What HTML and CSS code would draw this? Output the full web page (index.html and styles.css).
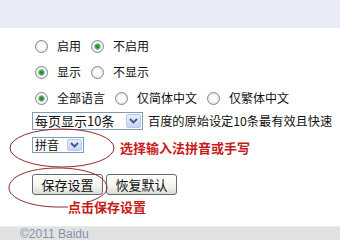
FILE: index.html
```html
<!DOCTYPE html>
<html lang="zh-CN">
<head>
<meta charset="utf-8">
<title>搜索设置</title>
<link rel="stylesheet" href="styles.css">
</head>
<body>
<div class="page">
  <div class="top"></div>
  <div class="main">
    <div class="row">
      <span class="radio"></span><span class="lbl">启用</span>
      <span class="radio on"></span><span class="lbl">不启用</span>
    </div>
    <div class="row">
      <span class="radio on"></span><span class="lbl">显示</span>
      <span class="radio"></span><span class="lbl">不显示</span>
    </div>
    <div class="row">
      <span class="radio on"></span><span class="lbl">全部语言</span>
      <span class="radio"></span><span class="lbl">仅简体中文</span>
      <span class="radio"></span><span class="lbl">仅繁体中文</span>
    </div>
    <div class="selrow">
      <div class="select sel-num">
        <span class="seltext">每页显示10条</span>
        <span class="arrow"><svg width="9" height="6" viewBox="0 0 9 6"><path d="M1 1 L4.5 4.5 L8 1" fill="none" stroke="#3d5585" stroke-width="1.8"/></svg></span>
      </div>
      <span class="note">百度的原始设定10条最有效且快速</span>
    </div>
    <div class="pyrow">
      <div class="select sel-py">
        <span class="seltext">拼音</span>
        <span class="arrow"><svg width="9" height="6" viewBox="0 0 9 6"><path d="M1 1 L4.5 4.5 L8 1" fill="none" stroke="#3d5585" stroke-width="1.8"/></svg></span>
      </div>
      <span class="red red-py">选择输入法拼音或手写</span>
    </div>
    <div class="btnrow">
      <button class="btn">保存设置</button>
      <button class="btn">恢复默认</button>
    </div>
    <div class="red hint">点击保存设置</div>
  </div>
  <div class="footer">©2011 Baidu</div>
  <svg class="marks" width="340" height="240" viewBox="0 0 340 240">
    <ellipse cx="62" cy="148" rx="52" ry="19" fill="none" stroke="#8e2a2a" stroke-width="1"/>
    <path d="M58 207 C 30 207, 9 198, 9 188 C 9 176, 30 168, 58 168 C 86 168, 107 176, 107 188 C 107 194, 98 199, 88 202" fill="none" stroke="#8e2a2a" stroke-width="1"/>
    <path d="M58 207 L68 207" fill="none" stroke="#8e2a2a" stroke-width="1"/>
  </svg>
</div>
</body>
</html>
```

FILE: styles.css
```css
html, body {
  margin: 0;
  padding: 0;
  background: #ffffff;
}
.page {
  position: relative;
  width: 340px;
  height: 240px;
  overflow: hidden;
  display: flex;
  flex-direction: column;
  font-family: "Noto Sans CJK SC", "Noto Sans", sans-serif;
  color: #111;
}
.top {
  height: 28px;
  background: #e8ecf7;
  flex: none;
}
.main {
  padding: 5px 0 0 32px;
  display: flex;
  flex-direction: column;
  flex: 1;
}
.row {
  height: 26px;
  display: flex;
  align-items: center;
  padding-left: 3px;
  font-size: 12px;
  line-height: 14px;
}
.radio {
  width: 11px;
  height: 11px;
  border: 1px solid #7d8a96;
  border-radius: 50%;
  background: radial-gradient(circle at 50% 50%, #ffffff 0, #fbfbfb 3px, #e2e2e2 6px);
  margin-right: 9px;
  flex: none;
}
.radio.on {
  background: radial-gradient(circle at 50% 50%, #2a8430 0, #35943c 1.8px, #9fd19f 3px, #ffffff 4px, #f0f0f0 5px, #dcdcdc 6px);
}
.lbl {
  margin-right: 10px;
  white-space: nowrap;
}
.selrow {
  margin-top: 1px;
  display: flex;
  align-items: center;
  height: 18px;
}
.select {
  box-sizing: border-box;
  border: 1px solid #7f9db9;
  background: #fff;
  display: flex;
  align-items: center;
  justify-content: space-between;
  padding: 0 1px 0 2px;
  flex: none;
  overflow: hidden;
}
.sel-num {
  width: 111px;
  height: 18px;
  font-size: 13px;
}
.sel-py {
  width: 52px;
  height: 16px;
  font-size: 12px;
}
.seltext {
  line-height: 14px;
  white-space: nowrap;
}
.arrow {
  box-sizing: border-box;
  width: 15px;
  height: 14px;
  border: 1px solid #b9cbe8;
  border-radius: 2px;
  background: linear-gradient(#e6eefb, #c4d5f3);
  display: flex;
  align-items: center;
  justify-content: center;
  flex: none;
}
.sel-py .arrow {
  height: 12px;
}
.note {
  margin-left: 5px;
  font-size: 12.2px;
  line-height: 15px;
  white-space: nowrap;
}
.pyrow {
  margin-top: 7px;
  display: flex;
  align-items: flex-start;
  height: 16px;
}
.red {
  color: #c81a1a;
  font-weight: bold;
  font-size: 13px;
  line-height: 15px;
  white-space: nowrap;
}
.red-py {
  margin-left: 36px;
  margin-top: 3px;
}
.btnrow {
  margin-top: 21px;
  display: flex;
  gap: 3px;
}
.btn {
  box-sizing: border-box;
  width: 71px;
  height: 21px;
  margin: 0;
  padding: 0;
  border: 1px solid #5f6a72;
  border-radius: 3px;
  background: linear-gradient(#ffffff, #f3f3ef 60%, #dcdcd6);
  font-family: "Noto Sans CJK SC", sans-serif;
  font-size: 13px;
  line-height: 17px;
  color: #111;
}
.hint {
  margin-top: 4px;
  margin-left: 36px;
}
.footer {
  flex: none;
  height: 13px;
  margin-top: auto;
  background: #e2e2e2;
  border-top: 1px solid #ececec;
  padding-left: 20px;
  font-family: "Liberation Sans", Arial, sans-serif;
  font-size: 12px;
  line-height: 14px;
  color: #8593ad;
}
.marks {
  position: absolute;
  left: 0;
  top: 0;
  pointer-events: none;
}
```
